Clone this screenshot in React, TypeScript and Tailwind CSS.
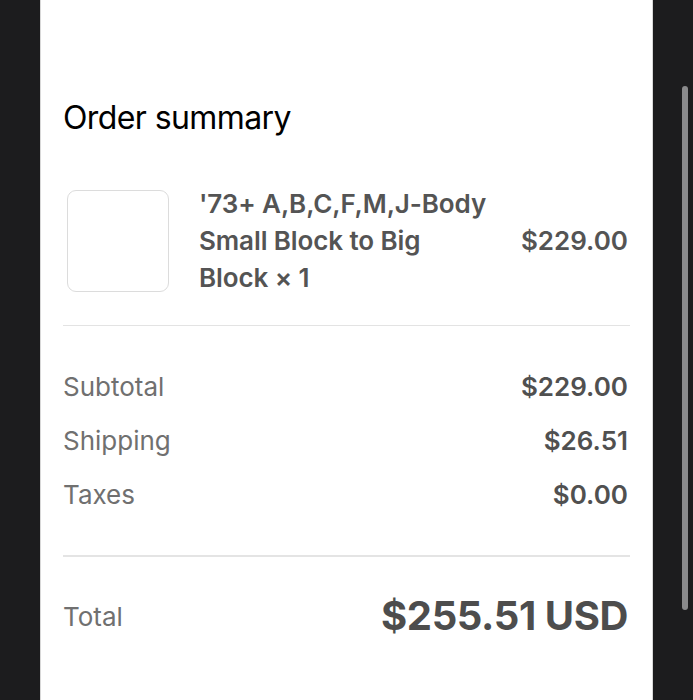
export default function App() {
  const rows = [
    { label: "Subtotal", value: "$229.00" },
    { label: "Shipping", value: "$26.51" },
    { label: "Taxes", value: "$0.00" },
  ];

  return (
    <div className="flex h-[700px] w-full overflow-hidden bg-[#1c1c1e] font-['Inter',sans-serif]">
      <div className="ml-[40px] h-full w-[613px] border-x border-[#d8d8d8] bg-white px-[22px]">
        <h2 className="pt-[96px] text-[32px] leading-[44px] tracking-[-0.6px] text-black">
          Order summary
        </h2>

        {/* line item */}
        <div className="mt-[45px] flex items-center border-b border-[#e3e3e3] pb-[29px] pl-[4px]">
          <div className="size-[102px] shrink-0 rounded-[9px] border border-[#dcdcdc]" />
          <p className="ml-[30px] flex-1 text-[26px] font-semibold leading-[37px] tracking-[-0.1px] text-[#545454]">
            '73+ A,B,C,F,M,J-Body
            <br />
            Small Block to Big
            <br />
            Block × 1
          </p>
          <span className="mr-[2px] text-[26px] font-semibold text-[#545454]">
            $229.00
          </span>
        </div>

        {/* totals */}
        <div className="flex flex-col gap-[18px] border-b-2 border-[#e4e4e4] pb-[42px] pt-[43px]">
          {rows.map((r) => (
            <div key={r.label} className="flex items-center justify-between pr-[2px] text-[26px] leading-[36px]">
              <span className="text-[#707070]">{r.label}</span>
              <span className="font-semibold text-[#505050]">{r.value}</span>
            </div>
          ))}
        </div>

        <div className="flex items-center justify-between pr-[2px] pt-[29px]">
          <span className="text-[26px] text-[#707070]">Total</span>
          <span className="text-[40px] font-bold tracking-[-0.4px] text-[#4d4d4d]">
            $255.51 USD
          </span>
        </div>
      </div>
      <div className="ml-[29px] mt-[86px] h-[524px] w-[6px] rounded-full bg-[#8a8a8c]" />
    </div>
  );
}
